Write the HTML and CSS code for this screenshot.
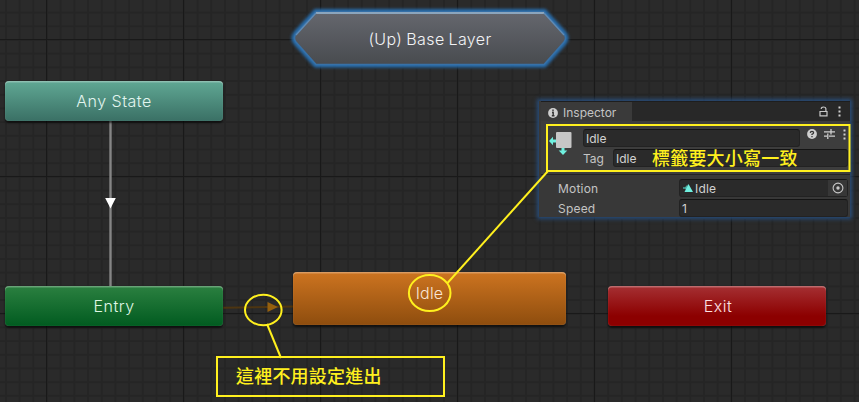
FILE: index.html
```
<!DOCTYPE html>
<html lang="zh-Hant">
<head>
<meta charset="utf-8">
<title>Animator</title>
<link rel="stylesheet" href="styles.css">
</head>
<body>
<main class="graph">
  <svg class="layer" viewBox="0 0 859 402">
    <path d="M110.5 120V288" stroke="#858585" stroke-width="2.4"/>
    <path d="M105.2 198h10.6l-5.3 10.5z" fill="#fff"/>
    <path d="M223 307.7L293 306.5" stroke="#4d3511" stroke-width="2"/>
    <path d="M267.5 302l10.500 5-10.500 5z" fill="#95600e"/>
  </svg>

  <div class="up">
    <svg class="up-shape" viewBox="0 0 290 70">
      <defs>
        <linearGradient id="steel" x2="0" y2="1"><stop stop-color="#65676e"/><stop offset="1" stop-color="#484b4f"/></linearGradient>
      </defs>
      <path class="up-glow" d="M31 7H259L279 29Q282 33 279 37L259 59.500H31L11 37Q8 33 11 29z"/>
      <path d="M31 7H259L279 29Q282 33 279 37L259 59.500H31L11 37Q8 33 11 29z" fill="url(#steel)" stroke="#3871a7" stroke-width="1.500"/>
      <path d="M31 8H259" stroke="#8ba5bd" stroke-width="1.800"/>
      <path d="M11 30L31 8M259 8L279 30" stroke="#5f8bb5" stroke-width="1.300"/>
    </svg>
    <span class="up-label">(Up) Base Layer</span>
  </div>
  <div class="node any"><span>Any State</span></div>
  <div class="node entry"><span>Entry</span></div>
  <div class="node idle"><span>Idle</span></div>
  <div class="node exit"><span>Exit</span></div>

  <section class="inspector">
    <header class="tabs">
      <div class="tab">
        <svg width="10" height="10" viewBox="0 0 10 10"><circle cx="5" cy="5" r="4.900" fill="#d0d0d0"/><path d="M5 1.600v1.700M4 4.500h1.200v3M3.800 7.700h2.700" stroke="#333" stroke-width="1.400" fill="none"/></svg>
        <span>Inspector</span>
      </div>
      <div class="tab-tools">
        <svg width="9" height="11" viewBox="0 0 9 11"><path d="M1 5.500h7v4.300H1zM2.300 3V2.600Q2.300 1 4.500 1T6.900 2.600V5.500" fill="none" stroke="#c8c8c8" stroke-width="1.200"/></svg>
        <svg width="3" height="11" viewBox="0 0 3 11" fill="#d0d0d0"><path d="M.5.500h2v2h-2zM.5 4.500h2v2h-2zM.5 8.500h2v2h-2z"/></svg>
      </div>
    </header>
    <div class="head">
      <svg class="state-icon" width="24" height="24" viewBox="0 0 24 24"><path d="M8 0h13.500q1 0 1 1v14q0 1-1 1H8q-1 0-1-1V1q0-1 1-1z" fill="#c6c6c6"/><path d="M0 9l4-4.200V7.500h3v3H4v2.700zM12.500 16h3v2.500h2.800L14 23l-4.300-4.500h2.800z" fill="#6ff0df"/></svg>
      <div class="head-fields">
        <div class="name-row">
          <div class="field name">Idle</div>
          <div class="head-tools">
            <svg width="10" height="10" viewBox="0 0 10 10"><circle cx="5" cy="5" r="4.900" fill="#d0d0d0"/><path d="M3.300 3.900Q3.400 2.300 5 2.300T6.600 3.800Q6.500 4.700 5 5.300V6.100M5 7v1.300" stroke="#333" stroke-width="1.300" fill="none"/></svg>
            <svg width="11" height="10" viewBox="0 0 11 10"><path d="M0 2.800h6M6 2.800h5M7 0v5.500M0 7.200h3M5 7.200h6M3.800 4.500V10" stroke="#d0d0d0" stroke-width="1.300"/></svg>
            <svg width="3" height="11" viewBox="0 0 3 11" fill="#d0d0d0"><path d="M.5.500h2v2h-2zM.5 4.500h2v2h-2zM.5 8.500h2v2h-2z"/></svg>
          </div>
        </div>
        <div class="tag-row"><span class="tag-label">Tag</span><div class="field">Idle</div></div>
      </div>
    </div>
    <div class="props">
      <div class="prop"><span>Motion</span><div class="field object">
        <svg width="10" height="8" viewBox="0 0 10 8"><path d="M0 3.300h2L4.500.500V7L2 4.800H0z" fill="#49aaa0"/><path d="M5.500 0L10 8H1.500z" fill="#6ff0df"/></svg>
        <span>Idle</span>
        <i class="picker"><svg width="12" height="12" viewBox="0 0 12 12"><circle cx="6" cy="6" r="4.900" fill="none" stroke="#c8c8c8" stroke-width="1.100"/><circle cx="6" cy="6" r="1.700" fill="#c8c8c8"/></svg></i>
      </div></div>
      <div class="prop"><span>Speed</span><div class="field">1</div></div>
    </div>
  </section>

  <svg class="layer marks" viewBox="0 0 859 402">
    <rect x="547" y="125" width="302.500" height="46"/>
    <path d="M548 171L447.500 283"/>
    <ellipse cx="429.700" cy="293" rx="20.800" ry="18"/>
    <ellipse cx="263.300" cy="310" rx="18.300" ry="15.300"/>
    <path d="M267 324L281 358"/>
    <rect x="217" y="357" width="227" height="39"/>
  </svg>
  <p class="note tag-note">標籤要大小寫一致</p>
  <p class="note entry-note">這裡不用設定進出</p>
</main>
</body>
</html>
```
FILE: styles.css
```
* { box-sizing: border-box; }
body { margin: 0; }
.graph {
  position: relative;
  width: 859px;
  height: 402px;
  overflow: hidden;
  font-family: Inter, "Noto Sans CJK TC", sans-serif;
  background-color: #2a2a2a;
  background-image:
    linear-gradient(90deg, #191919 1px, transparent 1px),
    linear-gradient(#191919 1px, transparent 1px),
    linear-gradient(90deg, #252525 1.500px, transparent 1.500px),
    linear-gradient(#252525 1.500px, transparent 1.500px);
  background-size: 137px 137px, 137px 137px, 13.700px 13.700px, 13.700px 13.700px;
  background-position: 46px 39px;
}
.layer { position: absolute; left: 0; top: 0; width: 859px; height: 402px; }
.marks { fill: none; stroke: #fff01e; stroke-width: 2; }

.node {
  position: absolute;
  display: flex;
  align-items: center;
  justify-content: center;
  border-radius: 4px;
  font-size: 16px;
  font-weight: 300;
  letter-spacing: .5px;
  box-shadow: inset 0 1.500px 0 rgba(255,255,255,.27), inset 0 0 1px rgba(255,255,255,.3), 0 2px 2px rgba(0,0,0,.6);
}
.any { left: 5px; top: 81px; width: 218px; height: 40px; color: #e2f5ef; background: linear-gradient(#60a894, #3a7065); }
.entry { left: 5px; top: 286px; width: 218px; height: 40px; color: #e0f8e6; background: linear-gradient(#2b8040, #015b20); }
.idle { left: 293px; top: 272px; width: 273px; height: 53px; padding-bottom: 12px; letter-spacing: .2px; color: #fae6d4; background: linear-gradient(#cd7420, #8e4d0e); }
.exit { left: 608px; top: 286px; width: 218px; height: 40px; padding-left: 2px; color: #ffe2e4; background: linear-gradient(#a53033, #8c0000 75%); }

.up { position: absolute; left: 285px; top: 5px; width: 290px; height: 70px; }
.up-shape { display: block; width: 290px; height: 70px; overflow: visible; }
.up-glow { fill: none; stroke: #286eae; stroke-width: 6; filter: blur(1.500px); }
.up-label { position: absolute; inset: 0; line-height: 69px; text-align: center; font-size: 16px; font-weight: 300; letter-spacing: .4px; word-spacing: -1px; color: #f2f3f5; }

.inspector {
  position: absolute;
  left: 539px;
  top: 101px;
  width: 311px;
  height: 116px;
  padding-left: 2px;
  background: #383838;
  color: #c4c4c4;
  font-size: 12px;
  box-shadow: 0 0 4px 2px #284d7a;
}
.tabs { display: flex; justify-content: space-between; height: 20px; background: #282828; border-top: 1px solid #1e1e1e; }
.tab { display: flex; align-items: center; gap: 5px; width: 91px; padding: 2px 0 0 7px; background: #3a3a3a; letter-spacing: 0; }
.tab-tools { display: flex; align-items: center; gap: 10px; padding: 0 9.500px 0 0; }
.head { display: flex; height: 54px; padding: 8px 2px 0 8px; background: #3d3d3d; border-bottom: 1px solid #232323; }
.state-icon { flex: none; margin-top: 3px; }
.head-fields { flex: 1; padding-left: 10px; }
.name-row { display: flex; height: 18px; margin-bottom: 2px; }
.name { width: 217px; }
.head-tools { display: flex; flex: 1; justify-content: space-between; height: 11px; padding: 0 2.500px 0 7px; }
.tag-row { display: flex; }
.tag-label { width: 30px; line-height: 19px; letter-spacing: 0; }
.field { height: 18px; padding-left: 2px; line-height: 17px; color: #d2d2d2; background: #2a2a2a; border: 1px solid #222; border-top-color: #141414; border-radius: 3px; }
.tag-row .field { flex: 1; }
.props { display: grid; gap: 2px; padding: 4px 2px 0 17px; }
.prop { display: grid; grid-template-columns: 121px 1fr; height: 18px; line-height: 19px; letter-spacing: .2px; }
.object { display: flex; align-items: center; gap: 2px; padding-left: 3px; }
.picker { display: flex; align-items: center; justify-content: center; align-self: stretch; width: 19px; margin-left: auto; background: #373737; }

.note { position: absolute; margin: 0; white-space: nowrap; font-size: 18px; font-weight: 500; line-height: 24px; letter-spacing: .2px; color: #fff01e; }
.tag-note { left: 652px; top: 147px; }
.entry-note { left: 236px; top: 365px; }
```
